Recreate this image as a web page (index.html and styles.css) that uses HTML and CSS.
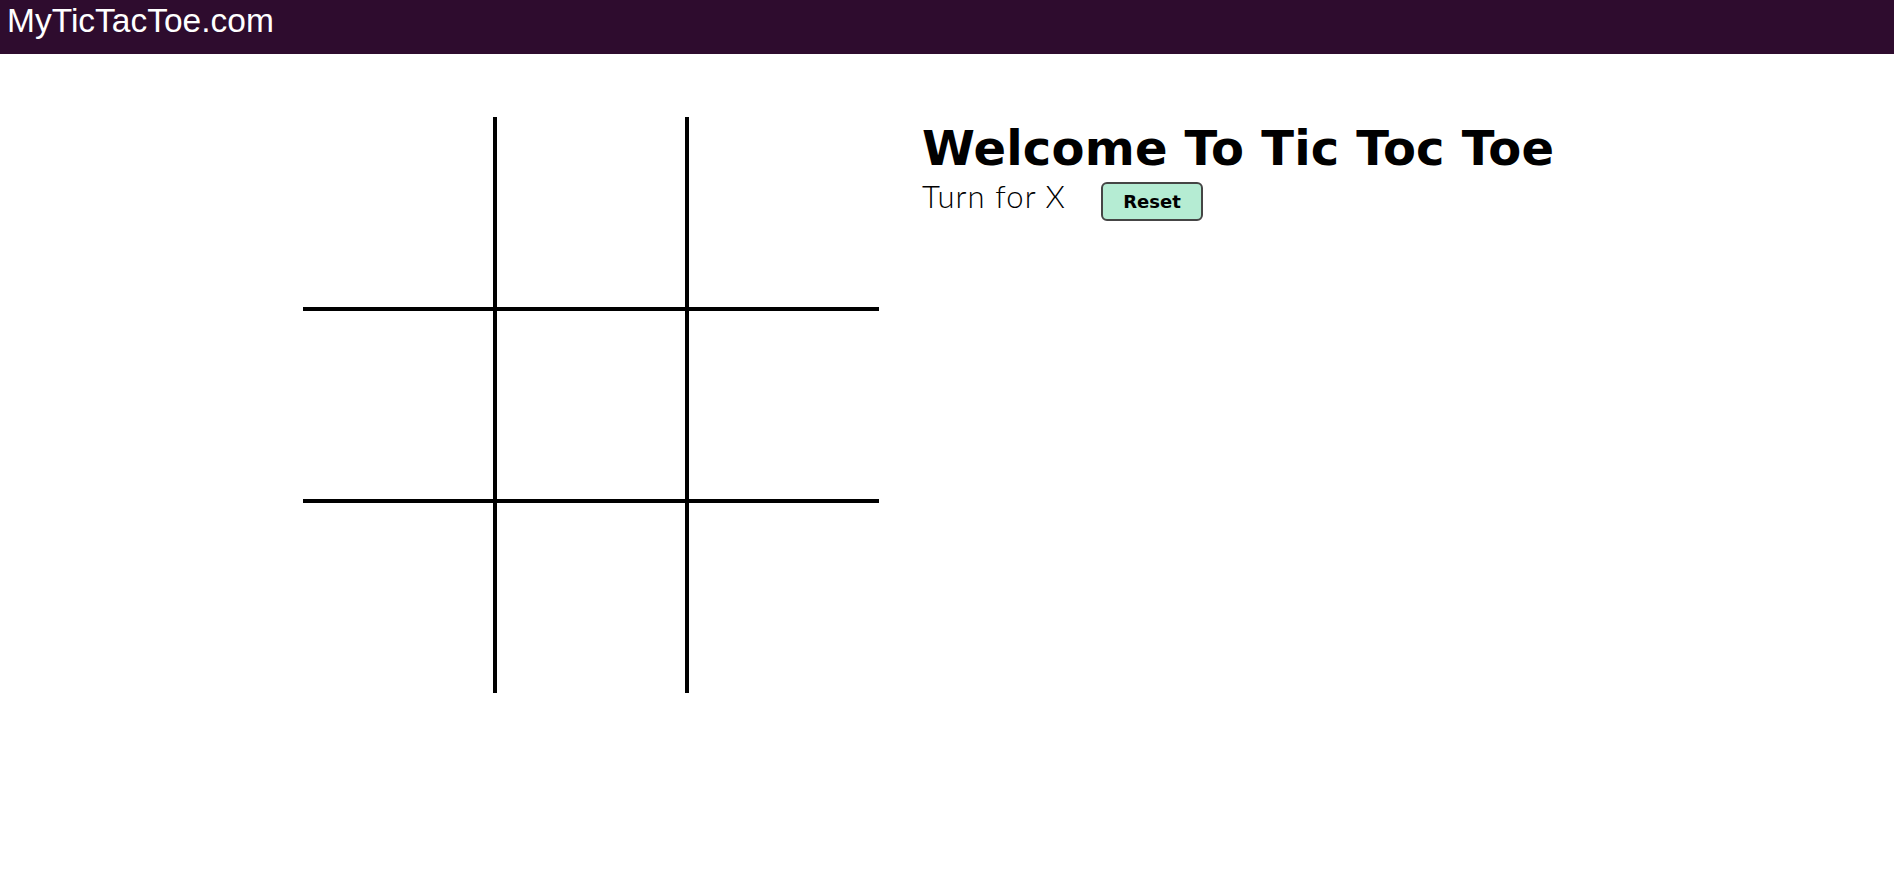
FILE: index.html
```html
<!DOCTYPE html>
<html lang="en">
<head>
<meta charset="utf-8">
<title>MyTicTacToe.com</title>
<link rel="stylesheet" href="styles.css">
</head>
<body>
<header class="topbar">
  <div class="brand">MyTicTacToe.com</div>
</header>
<main class="game">
  <div class="board">
    <div class="cell"></div><div class="cell"></div><div class="cell"></div>
    <div class="cell"></div><div class="cell"></div><div class="cell"></div>
    <div class="cell"></div><div class="cell"></div><div class="cell"></div>
  </div>
  <section class="info">
    <h1 class="title">Welcome To Tic Toc Toe</h1>
    <div class="status-row">
      <span class="turn">Turn for X</span>
      <button class="reset">Reset</button>
    </div>
  </section>
</main>
</body>
</html>
```

FILE: styles.css
```css
html, body {
  margin: 0;
  padding: 0;
  background: #ffffff;
}

.topbar {
  height: 54px;
  background: #2e0c2e;
  display: flex;
  align-items: flex-start;
}

.brand {
  font-family: "Liberation Sans", Arial, sans-serif;
  font-size: 33.5px;
  line-height: 38px;
  color: #ffffff;
  padding-left: 7px;
  padding-top: 2px;
}

.game {
  display: flex;
  justify-content: center;
  gap: 43px;
  padding-top: 63px;
}

.board {
  width: 576px;
  height: 576px;
  display: grid;
  grid-template-columns: 190px 188px 190px;
  grid-template-rows: 190px 188px 190px;
  gap: 4px;
  background: #000000;
  flex: none;
}

.cell {
  background: #ffffff;
}

.info {
  width: 669px;
  flex: none;
}

.title {
  margin: 3px 0 0 0;
  font-family: "DejaVu Sans", sans-serif;
  font-size: 48px;
  font-weight: 700;
  letter-spacing: 0.2px;
  line-height: 57px;
  color: #000000;
}

.status-row {
  display: flex;
  align-items: baseline;
  gap: 35px;
}

.turn {
  font-family: Lato, "Open Sans", sans-serif;
  font-size: 31px;
  font-weight: 300;
  letter-spacing: 1.1px;
  color: #000000;
}

.reset {
  width: 102px;
  height: 39px;
  background: #b5ecd3;
  border: 2px solid #454545;
  border-radius: 6px;
  font-family: "DejaVu Sans", sans-serif;
  font-size: 18px;
  font-weight: 700;
  color: #000000;
  padding: 0;
}
```
